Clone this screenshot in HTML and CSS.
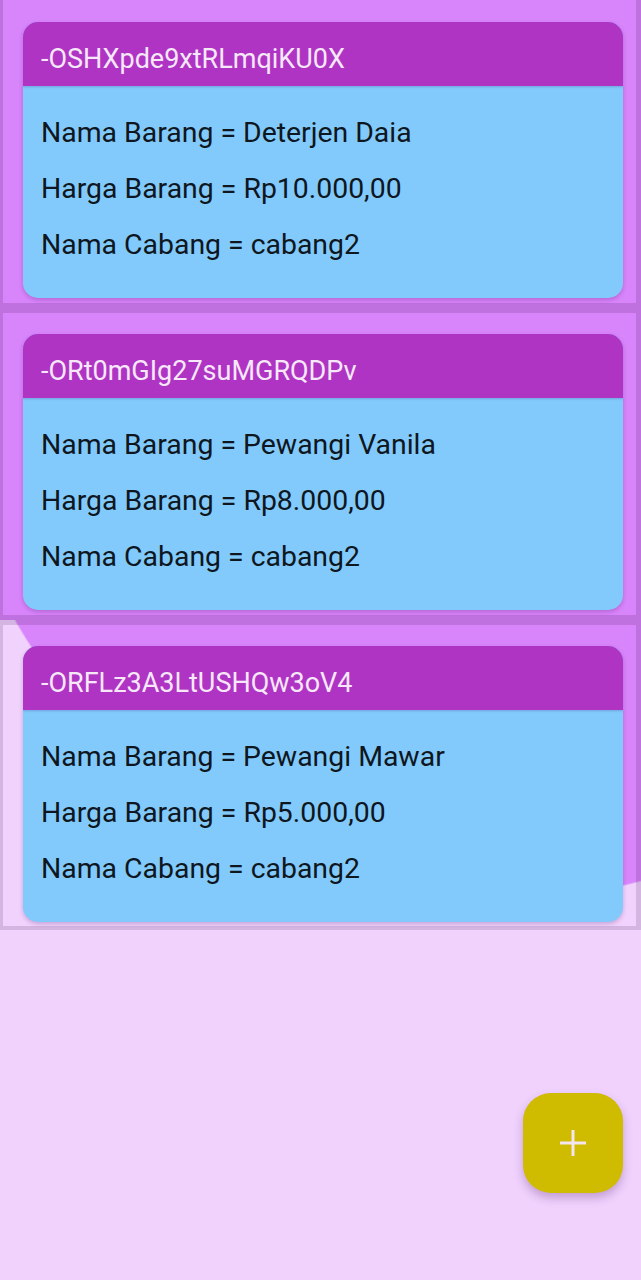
FILE: index.html
```html
<!DOCTYPE html>
<html lang="id">
<head>
<meta charset="utf-8">
<title>Daftar Barang</title>
<link rel="stylesheet" href="styles.css">
</head>
<body>
<main class="list">
  <section class="item item-first">
    <div class="card">
      <div class="card-head">-OSHXpde9xtRLmqiKU0X</div>
      <div class="card-body">
        <p class="line">Nama Barang = Deterjen Daia</p>
        <p class="line">Harga Barang = Rp10.000,00</p>
        <p class="line">Nama Cabang = cabang2</p>
      </div>
    </div>
  </section>
  <section class="item">
    <div class="card">
      <div class="card-head">-ORt0mGIg27suMGRQDPv</div>
      <div class="card-body">
        <p class="line">Nama Barang = Pewangi Vanila</p>
        <p class="line">Harga Barang = Rp8.000,00</p>
        <p class="line">Nama Cabang = cabang2</p>
      </div>
    </div>
  </section>
  <section class="item item-pressed">
    <div class="card">
      <div class="card-head">-ORFLz3A3LtUSHQw3oV4</div>
      <div class="card-body">
        <p class="line">Nama Barang = Pewangi Mawar</p>
        <p class="line">Harga Barang = Rp5.000,00</p>
        <p class="line">Nama Cabang = cabang2</p>
      </div>
    </div>
  </section>
</main>
<button class="fab" aria-label="Tambah">
  <svg width="30" height="30" viewBox="0 0 30 30"><path d="M15 2v26M2 15h26" stroke="#f3e6ee" stroke-width="3" fill="none"/></svg>
</button>
</body>
</html>
```
FILE: styles.css
```css
html, body {
  margin: 0;
  padding: 0;
}
body {
  background: #f0d2fd;
  font-family: Roboto, "Noto Sans", sans-serif;
  width: 641px;
  min-height: 1280px;
}
.list {
  display: flex;
  flex-direction: column;
}
.item {
  background: #d884fb;
  border: solid rgba(40, 0, 60, 0.14);
  border-width: 5px 5px 5px 3px;
  padding: 21px 13px 5px 20px;
  background-clip: border-box;
}
.item-first {
  border-top-width: 0;
  padding-top: 22px;
}
.item-pressed {
  padding-bottom: 4px;
  border-bottom-width: 4px;
  background-origin: border-box;
  background-color: #f0d2fd;
  background-image: radial-gradient(circle 555px at 497px -275px, #d884fb 554px, #f0d2fd 556px);
}
.card {
  border-radius: 15px;
  overflow: hidden;
  background: #82cafc;
  box-shadow: 0 2px 4px rgba(60, 0, 80, 0.22);
}
.card-head {
  height: 64px;
  box-sizing: border-box;
  background: #b034c4;
  color: #f6e8f8;
  font-size: 27px;
  display: flex;
  align-items: center;
  padding: 10px 0 0 18px;
  box-shadow: 0 1px 2px rgba(60, 0, 80, 0.2);
  position: relative;
}
.card-body {
  padding: 19px 18px 25px;
}
.line {
  margin: 0;
  height: 56px;
  line-height: 56px;
  font-size: 28.4px;
  color: #0e1620;
  white-space: nowrap;
}
.fab {
  position: fixed;
  left: 523px;
  top: 1093px;
  width: 100px;
  height: 100px;
  border: none;
  border-radius: 28px;
  background: #cfbb00;
  box-shadow: 0 5px 10px rgba(90, 40, 110, 0.3);
  display: flex;
  align-items: center;
  justify-content: center;
  padding: 0;
}
```
